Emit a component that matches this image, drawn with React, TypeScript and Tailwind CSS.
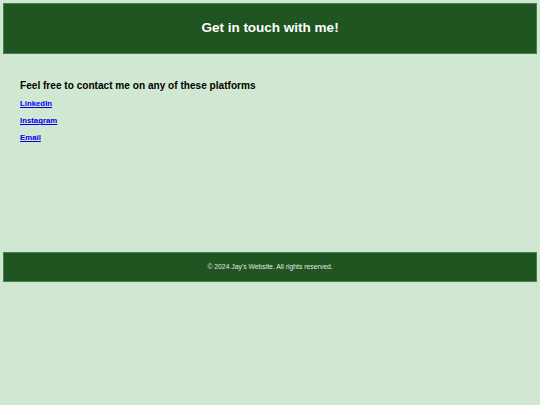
export default function App() {
  return (
    <div className="min-h-[405px] bg-[#d0e8d1] pt-[3px] font-['Liberation_Sans',Arial,sans-serif]">
      <header className="mx-[3px] flex h-[51px] items-center justify-center border border-[#4a7f4a] bg-[#1e5520]">
        <h1 className="text-[13.5px] font-bold text-white">Get in touch with me!</h1>
      </header>
      <main className="h-[198px] px-5 pt-[25px]">
        <h2 className="text-[10.1px] font-bold leading-[14px] text-black">
          Feel free to contact me on any of these platforms
        </h2>
        <ul className="mt-[6px] flex flex-col gap-[7px] text-[7.8px] font-bold leading-[10px]">
          <li>
            <a href="#" className="text-[#0000ee] underline">LinkedIn</a>
          </li>
          <li>
            <a href="#" className="text-[#0000ee] underline">Instagram</a>
          </li>
          <li>
            <a href="#" className="text-[#0000ee] underline">Email</a>
          </li>
        </ul>
      </main>
      <footer className="mx-[3px] flex h-[30px] items-center justify-center border border-[#4a7f4a] bg-[#1e5520]">
        <p className="text-[6.8px] text-[#e6e6e6]">© 2024 Jay's Website. All rights reserved.</p>
      </footer>
    </div>
  )
}
